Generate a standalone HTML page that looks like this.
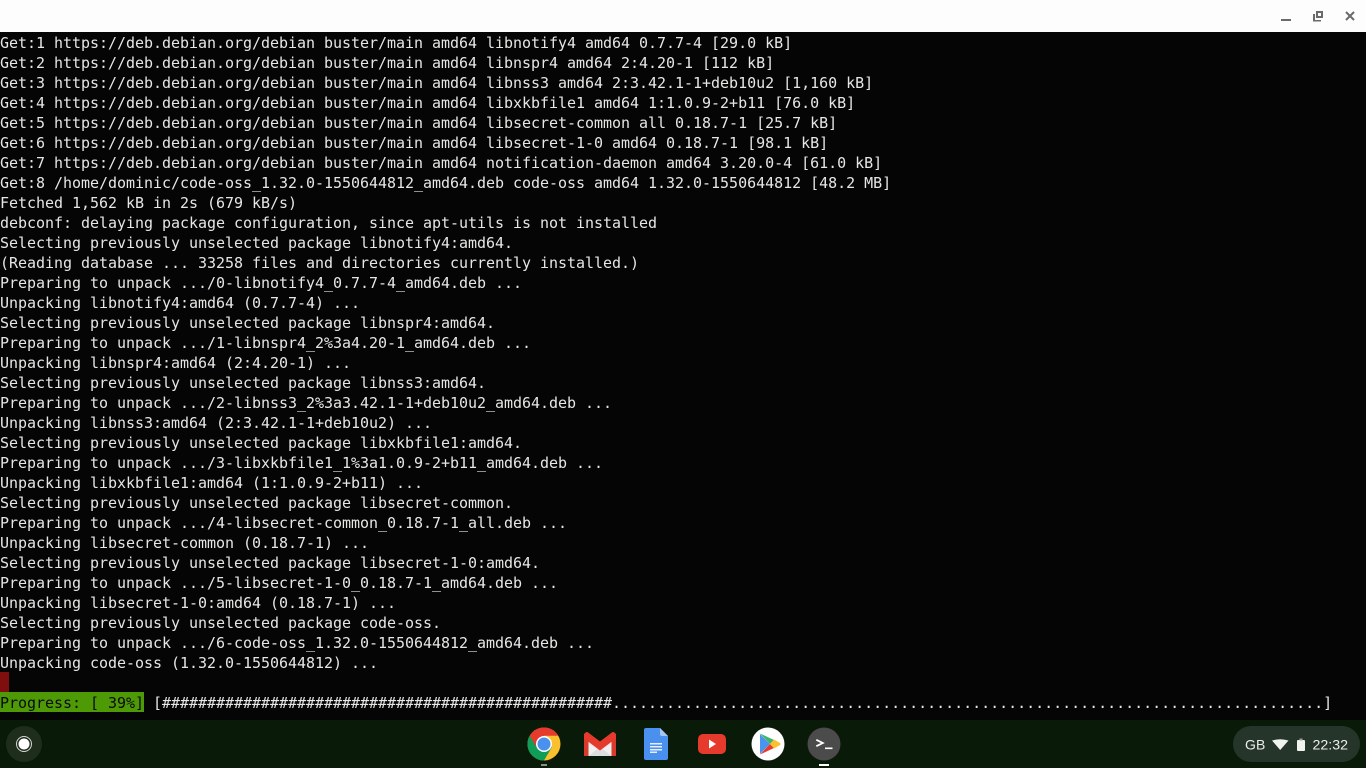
<!DOCTYPE html>
<html><head><meta charset="utf-8"><style>
html,body{margin:0;padding:0;width:1366px;height:768px;overflow:hidden;background:#050505}
#tb{position:absolute;left:0;top:0;width:1366px;height:32px;background:#fdfdfd}
#term{position:absolute;left:0;top:32px;width:1366px;height:688px;background:#050505;color:#e6e6e4;font:15px/22px "DejaVu Sans Mono","Liberation Mono",monospace;letter-spacing:-0.03px;white-space:pre;font-variant-ligatures:none}
#term div{height:20px}
.g{display:inline-block;height:20px;background:#4e9a06;color:#0a0a0a}
.r{display:inline-block;width:9px;height:20px;background:#7f0f0f;vertical-align:top}
#shelf{position:absolute;left:0;top:720px;width:1366px;height:48px;background:#0a1a08}
svg{position:absolute;left:0;top:0}
svg text{font-family:"Liberation Sans",sans-serif;fill:#eceeec}
</style></head><body>
<div id="tb"></div>
<div id="term"><div>Get:1 https://deb.debian.org/debian buster/main amd64 libnotify4 amd64 0.7.7-4 [29.0 kB]</div><div>Get:2 https://deb.debian.org/debian buster/main amd64 libnspr4 amd64 2:4.20-1 [112 kB]</div><div>Get:3 https://deb.debian.org/debian buster/main amd64 libnss3 amd64 2:3.42.1-1+deb10u2 [1,160 kB]</div><div>Get:4 https://deb.debian.org/debian buster/main amd64 libxkbfile1 amd64 1:1.0.9-2+b11 [76.0 kB]</div><div>Get:5 https://deb.debian.org/debian buster/main amd64 libsecret-common all 0.18.7-1 [25.7 kB]</div><div>Get:6 https://deb.debian.org/debian buster/main amd64 libsecret-1-0 amd64 0.18.7-1 [98.1 kB]</div><div>Get:7 https://deb.debian.org/debian buster/main amd64 notification-daemon amd64 3.20.0-4 [61.0 kB]</div><div>Get:8 /home/dominic/code-oss_1.32.0-1550644812_amd64.deb code-oss amd64 1.32.0-1550644812 [48.2 MB]</div><div>Fetched 1,562 kB in 2s (679 kB/s)</div><div>debconf: delaying package configuration, since apt-utils is not installed</div><div>Selecting previously unselected package libnotify4:amd64.</div><div>(Reading database ... 33258 files and directories currently installed.)</div><div>Preparing to unpack .../0-libnotify4_0.7.7-4_amd64.deb ...</div><div>Unpacking libnotify4:amd64 (0.7.7-4) ...</div><div>Selecting previously unselected package libnspr4:amd64.</div><div>Preparing to unpack .../1-libnspr4_2%3a4.20-1_amd64.deb ...</div><div>Unpacking libnspr4:amd64 (2:4.20-1) ...</div><div>Selecting previously unselected package libnss3:amd64.</div><div>Preparing to unpack .../2-libnss3_2%3a3.42.1-1+deb10u2_amd64.deb ...</div><div>Unpacking libnss3:amd64 (2:3.42.1-1+deb10u2) ...</div><div>Selecting previously unselected package libxkbfile1:amd64.</div><div>Preparing to unpack .../3-libxkbfile1_1%3a1.0.9-2+b11_amd64.deb ...</div><div>Unpacking libxkbfile1:amd64 (1:1.0.9-2+b11) ...</div><div>Selecting previously unselected package libsecret-common.</div><div>Preparing to unpack .../4-libsecret-common_0.18.7-1_all.deb ...</div><div>Unpacking libsecret-common (0.18.7-1) ...</div><div>Selecting previously unselected package libsecret-1-0:amd64.</div><div>Preparing to unpack .../5-libsecret-1-0_0.18.7-1_amd64.deb ...</div><div>Unpacking libsecret-1-0:amd64 (0.18.7-1) ...</div><div>Selecting previously unselected package code-oss.</div><div>Preparing to unpack .../6-code-oss_1.32.0-1550644812_amd64.deb ...</div><div>Unpacking code-oss (1.32.0-1550644812) ...</div><div><span class="r"></span></div><div><span class="g">Progress: [ 39%]</span> [##################################################...............................................................................]</div></div>
<div id="shelf"></div>
<svg width="1366" height="768" viewBox="0 0 1366 768">
  <!-- window controls -->
  <rect x="1281" y="19" width="10" height="2" fill="#6a6a6a"/>
  <path d="M1316 11h7v7h-7z M1318 13v3h3v-3z" fill="#6a6a6a" fill-rule="evenodd"/>
  <path d="M1313 14h2v6h6v1.500h-8z" fill="#6a6a6a"/>
  <path d="M1346 12l8 8M1354 12l-8 8" stroke="#6a6a6a" stroke-width="2" fill="none"/>

  <!-- launcher -->
  <circle cx="24" cy="744" r="18" fill="#1e2d1c"/>
  <circle cx="24" cy="744" r="7.500" fill="none" stroke="#d5d8d5" stroke-width="1"/>
  <circle cx="24" cy="744" r="5.500" fill="#fff"/>

  <!-- chrome -->
  <circle cx="544" cy="744" r="16.500" fill="#fbc02d"/>
  <path d="M544 744L529.700 735.750A16.500 16.500 0 0 1 558.300 735.750L544 735.750Z" fill="#e53a2c"/>
  <path d="M529.700 735.750A16.500 16.500 0 0 0 544 760.500L552 747Z" fill="#0f9d58"/>
  <path d="M529.700 735.750L537 748L544 744L544 735.750Z" fill="#e53a2c"/>
  <circle cx="544" cy="744" r="8" fill="#fff"/>
  <circle cx="544" cy="744" r="6.500" fill="#4a90ee"/>
  <rect x="541" y="764" width="6" height="2" fill="#8a8f8a"/>

  <!-- gmail -->
  <path d="M584 734L600 746L616 734V756H584Z" fill="#f0f0f0"/>
  <path d="M588.500 756L600 747L611.500 756Z" fill="#dddddd"/>
  <rect x="584" y="735" width="4.500" height="21" fill="#d93a2c"/>
  <rect x="611.500" y="735" width="4.500" height="21" fill="#d93a2c"/>
  <path d="M584 734.500Q585 732 587.500 732L600 741.500L612.500 732Q615 732 616 734.500V738.500L600 750.500L584 738.500Z" fill="#e53a2c"/>

  <!-- docs -->
  <path d="M646 728H660L668 736V758a2 2 0 0 1-2 2H646a2 2 0 0 1-2-2V730a2 2 0 0 1 2-2Z" fill="#4a90ee"/>
  <path d="M660 728L668 736H662a2 2 0 0 1-2-2Z" fill="#a6c5f2"/>
  <rect x="650" y="743" width="12" height="1.500" fill="#e6eefb"/>
  <rect x="650" y="746" width="12" height="1.500" fill="#e6eefb"/>
  <rect x="650" y="749" width="12" height="1.500" fill="#e6eefb"/>
  <rect x="650" y="751.500" width="7" height="1.500" fill="#e6eefb"/>

  <!-- youtube -->
  <rect x="698" y="734" width="28" height="20" rx="5" fill="#e53a2c"/>
  <path d="M709 739.500L716 744L709 748.500Z" fill="#fff"/>

  <!-- play -->
  <circle cx="768" cy="744" r="16.500" fill="#fff"/>
  <path d="M760 734V754L770 744Z" fill="#4a94ee"/>
  <path d="M760 733.500L770 744L774 740Z" fill="#3fb56a"/>
  <path d="M760 754.500L770 744L774 748Z" fill="#e53a2c"/>
  <path d="M774 739.500L780 743a1.200 1.200 0 0 1 0 2L774 748.500L770 744Z" fill="#fbc02d"/>

  <!-- terminal -->
  <circle cx="824" cy="744" r="16.500" fill="#4b4b4c"/>
  <path d="M816.300 739.800L822.800 743L816.300 746.200" fill="none" stroke="#fff" stroke-width="1.800"/>
  <rect x="825" y="747.500" width="7.500" height="1.600" fill="#fff"/>
  <rect x="819" y="764" width="10" height="2" fill="#fff"/>

  <!-- tray -->
  <rect x="1233" y="726" width="127" height="36" rx="18" fill="#25352a"/>
  <text x="1245" y="749.500" font-size="14" letter-spacing="0.100">GB</text>
  <path d="M1272 740.500Q1280 738 1288.500 740.500L1280.200 750Z" fill="#f1f3f1"/>
  <rect x="1297" y="740" width="8" height="11" rx="1" fill="#f1f3f1"/>
  <rect x="1299.500" y="738.500" width="3" height="2" fill="#9ba29b"/>
  <text x="1312.500" y="749.500" font-size="14.200">22:32</text>
</svg>
</body></html>
